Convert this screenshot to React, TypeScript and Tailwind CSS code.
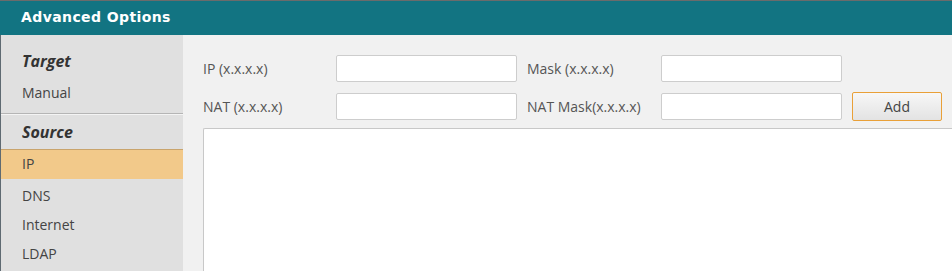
import React from 'react';

const font = { fontFamily: '"Open Sans", "Noto Sans", "Liberation Sans", sans-serif' };

function SideItem({ label, active }: { label: string; active?: boolean }) {
  return (
    <div
      className={
        active
          ? 'h-[30px] border-t border-[#c9a46c] bg-[#f2c98a] pl-[21px] text-[14px] leading-[28px] text-[#444]'
          : 'h-[29px] pl-[21px] text-[14px] leading-[29px] text-[#444]'
      }
    >
      {label}
    </div>
  );
}

function Field({ width = 'w-[181px]' }: { width?: string }) {
  return <input type="text" className={`h-[27px] ${width} rounded-[2px] border border-[#cdcdcd] bg-white outline-none`} />;
}

export default function App() {
  return (
    <div className="flex h-[271px] w-[952px] flex-col overflow-hidden bg-[#f1f1f1]" style={font}>
      <div
        className="h-[35px] shrink-0 border-t border-[#6b6b6b] bg-[#127482] pl-[21px] text-[14px] font-bold leading-[33px] tracking-[0.4px] text-white"
        style={{ fontFamily: '"DejaVu Sans", Verdana, sans-serif' }}
      >
        Advanced Options
      </div>
      <div className="flex min-h-0 flex-1">
        <div className="w-[183px] shrink-0 border-l border-[#5f6a72] bg-[#e0e0e0]">
          <div className="pl-[21px] pt-[14px] text-[16px] font-bold italic leading-[24px] text-[#333]">Target</div>
          <div className="mt-[9px] pl-[21px] text-[14px] leading-[22px] text-[#444]">Manual</div>
          <div className="mt-[9px] border-t border-[#b5b5b5] shadow-[0_1px_0_#f4f4f4]" />
          <div className="pl-[21px] pt-[7px] text-[16px] font-bold italic leading-[22px] text-[#333]">Source</div>
          <div className="mt-[6px]">
            <SideItem label="IP" active />
            <div className="pt-[2px]">
              <SideItem label="DNS" />
              <SideItem label="Internet" />
              <SideItem label="LDAP" />
            </div>
          </div>
        </div>
        <div className="flex min-w-0 flex-1 flex-col pl-[20px] pt-[20px]">
          <div className="flex items-center">
            <div className="w-[133px] text-[14px] text-[#555]">IP (x.x.x.x)</div>
            <Field />
            <div className="ml-[10px] w-[134px] text-[14px] text-[#555]">Mask (x.x.x.x)</div>
            <Field />
          </div>
          <div className="mt-[10px] flex items-center">
            <div className="w-[133px] text-[14px] text-[#555]">NAT (x.x.x.x)</div>
            <Field />
            <div className="ml-[10px] w-[134px] text-[14px] text-[#555]">NAT Mask(x.x.x.x)</div>
            <Field />
            <button
              type="button"
              className="ml-[10px] h-[29px] w-[90px] rounded-[2px] border border-[#e9a038] bg-gradient-to-b from-[#f7f7f7] to-[#e3e3e3] text-[14px] text-[#444]"
            >
              Add
            </button>
          </div>
          <div className="mt-[7px] flex-1 rounded-tl-[2px] border-l border-t border-[#c8c8c8] bg-white" />
        </div>
      </div>
    </div>
  );
}
